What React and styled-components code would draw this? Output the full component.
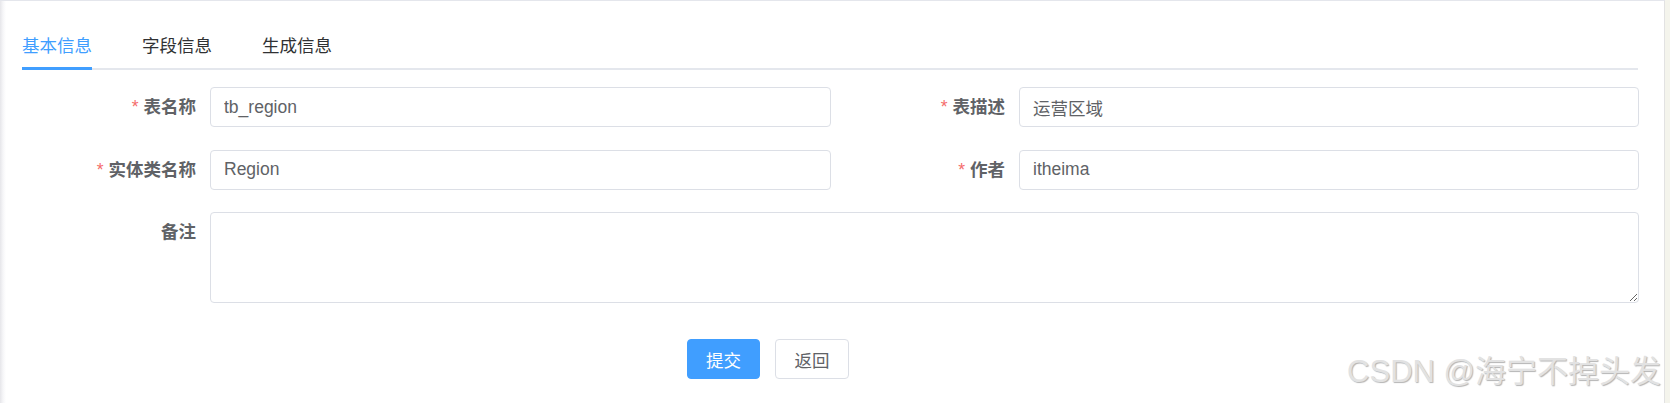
import React, { useState } from "react";
import styled, { createGlobalStyle } from "styled-components";

const GlobalStyle = createGlobalStyle`
  html, body {
    margin: 0;
    padding: 0;
    background: #f4f4ec;
  }
  body {
    font-family: "Liberation Sans", Arial, "Noto Sans CJK SC", sans-serif;
  }
`;

const Card = styled.div`
  position: relative;
  box-sizing: border-box;
  width: 1665px;
  height: 403px;
  padding: 21px 26px 0 22px;
  background: linear-gradient(to right, #e6e6ea 0, #f6f6f8 3px, #fff 6px);
  border-top: 1px solid #e4e6ec;
  border-right: 1px solid #e2e2e2;
  overflow: hidden;
`;

const TabBar = styled.div`
  position: relative;
  display: flex;
  height: 48px;
  &::after {
    content: "";
    position: absolute;
    left: 0;
    right: 0;
    bottom: 0;
    height: 2px;
    background: #e4e7ed;
  }
`;

const Tab = styled.div`
  position: relative;
  padding: 0 25px;
  line-height: 48px;
  font-size: 17.5px;
  color: ${props => (props.active ? "#409eff" : "#303133")};
  cursor: pointer;
  &:first-child {
    padding-left: 0;
  }
  &::after {
    content: "";
    position: absolute;
    left: ${props => (props.first ? "0" : "25px")};
    right: 25px;
    bottom: 0;
    height: 3px;
    z-index: 1;
    background: ${props => (props.active ? "#409eff" : "transparent")};
  }
`;

const Form = styled.div`
  display: grid;
  grid-template-columns: 188px 621px 188px 620px;
  row-gap: 22.5px;
  margin-top: 17px;
`;

const Label = styled.label`
  box-sizing: border-box;
  padding-right: 14px;
  text-align: right;
  line-height: 40px;
  font-size: 17.5px;
  font-weight: bold;
  color: #606266;
  &::before {
    content: ${props => (props.required ? '"*"' : "none")};
    margin-right: 5px;
    font-weight: normal;
    color: #f56c6c;
  }
`;

const Input = styled.input`
  box-sizing: border-box;
  width: 100%;
  height: 40px;
  padding: 0 13px;
  border: 1px solid #dcdfe6;
  border-radius: 4px;
  font-family: inherit;
  font-size: 17.5px;
  color: #606266;
  outline: none;
`;

const TextArea = styled.textarea`
  grid-column: 2 / 5;
  box-sizing: border-box;
  width: 100%;
  height: 91px;
  padding: 5px 13px;
  border: 1px solid #dcdfe6;
  border-radius: 4px;
  font-family: inherit;
  font-size: 17.5px;
  color: #606266;
  outline: none;
  resize: vertical;
`;

const Footer = styled.div`
  display: flex;
  gap: 15px;
  margin-top: 36px;
  padding-left: 665px;
`;

const Button = styled.button`
  box-sizing: border-box;
  height: 40px;
  padding: 0 ${props => (props.primary ? "18px" : "18.5px")};
  border: 1px solid ${props => (props.primary ? "#409eff" : "#dcdfe6")};
  border-radius: 4px;
  background: ${props => (props.primary ? "#409eff" : "#fff")};
  color: ${props => (props.primary ? "#fff" : "#606266")};
  font-family: inherit;
  font-size: 17.5px;
  cursor: pointer;
`;

const Watermark = styled.div`
  position: absolute;
  right: 3px;
  bottom: 12px;
  font-size: 31px;
  line-height: 38px;
  color: #e2e2e2;
  text-shadow: 1px 1px 1px #b4b4b4;
  white-space: nowrap;
  pointer-events: none;
`;

const tabs = ["基本信息", "字段信息", "生成信息"];

export default function App() {
  const [active, setActive] = useState(0);
  return (
    <>
      <GlobalStyle />
      <Card>
        <TabBar>
          {tabs.map((t, i) => (
            <Tab key={t} first={i === 0} active={i === active} onClick={() => setActive(i)}>
              {t}
            </Tab>
          ))}
        </TabBar>
        <Form>
          <Label required>表名称</Label>
          <Input defaultValue="tb_region" />
          <Label required>表描述</Label>
          <Input defaultValue="运营区域" />
          <Label required>实体类名称</Label>
          <Input defaultValue="Region" />
          <Label required>作者</Label>
          <Input defaultValue="itheima" />
          <Label>备注</Label>
          <TextArea />
        </Form>
        <Footer>
          <Button primary>提交</Button>
          <Button>返回</Button>
        </Footer>
        <Watermark>CSDN @海宁不掉头发</Watermark>
      </Card>
    </>
  );
}
